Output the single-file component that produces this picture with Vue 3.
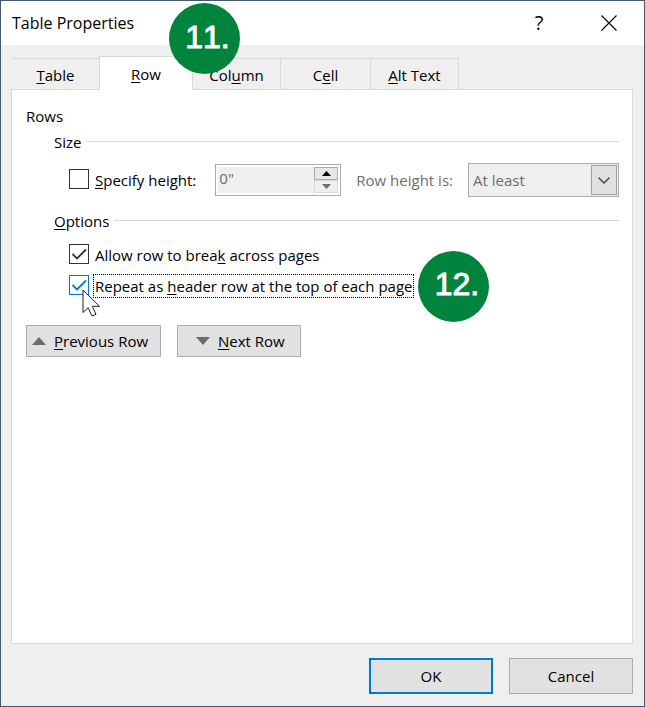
<script setup>
import { ref } from 'vue'

const activeTab = ref('Row')
const tabs = [
  { name: 'Table', before: '', key: 'T', after: 'able', width: 'w-table' },
  { name: 'Row', before: '', key: 'R', after: 'ow', width: 'w-row' },
  { name: 'Column', before: 'Col', key: 'u', after: 'mn', width: 'w-column' },
  { name: 'Cell', before: 'C', key: 'e', after: 'll', width: 'w-cell' },
  { name: 'Alt Text', before: '', key: 'A', after: 'lt Text', width: 'w-alt' },
]

const specifyHeight = ref(false)
const allowBreak = ref(true)
const repeatHeader = ref(true)
const height = ref('0"')
</script>

<template>
  <main class="dialog">
    <header class="titlebar">
      <h1>Table Properties</h1>
      <span class="badge badge-tab">11.</span>
      <button class="caption help" type="button" aria-label="Help">?</button>
      <button class="caption" type="button" aria-label="Close">
        <svg width="16" height="16" viewBox="0 0 16 16"><path d="M.5 .5L15.5 15.5M15.5 .5L.5 15.5" stroke="#000" stroke-width="1.1" fill="none" /></svg>
      </button>
    </header>

    <nav class="tabs" role="tablist">
      <button
        v-for="tab in tabs"
        :key="tab.name"
        type="button"
        role="tab"
        :aria-selected="tab.name === activeTab"
        :class="['tab', tab.width, { active: tab.name === activeTab }]"
        @click="activeTab = tab.name"
      >{{ tab.before }}<u>{{ tab.key }}</u>{{ tab.after }}</button>
    </nav>

    <section class="panel">
      <h2>Rows</h2>

      <div class="group">
        <div class="legend"><span>Size</span><i></i></div>
        <div class="size-row">
          <label class="option" for="specify">
            <span class="check"><input id="specify" v-model="specifyHeight" type="checkbox" /></span>
            <span class="caption-text"><u>S</u>pecify height:</span>
          </label>
          <div class="spinner">
            <input v-model="height" type="text" aria-label="Height" disabled />
            <div class="steps">
              <button class="up" type="button" aria-label="Increase">
                <svg width="9" height="5" viewBox="0 0 9 5"><path d="M0 5L4.500 0L9 5Z" fill="#000" /></svg>
              </button>
              <button class="down" type="button" aria-label="Decrease">
                <svg width="9" height="5" viewBox="0 0 9 5"><path d="M0 0L4.500 5L9 0Z" fill="#6d6d6d" /></svg>
              </button>
            </div>
          </div>
          <label class="muted" for="rule">Row height is:</label>
          <div class="combo">
            <select id="rule" disabled>
              <option>At least</option>
              <option>Exactly</option>
            </select>
            <span class="arrow">
              <svg width="12" height="7" viewBox="0 0 12 7"><path d="M.7 .7L6 6L11.300 .7" stroke="#404040" stroke-width="1.300" fill="none" /></svg>
            </span>
          </div>
        </div>
      </div>

      <div class="group options">
        <div class="legend"><span><u>O</u>ptions</span><i></i></div>
        <label class="option" for="break">
          <span class="check">
            <input id="break" v-model="allowBreak" type="checkbox" />
            <svg v-if="allowBreak" class="tick" width="20" height="20" viewBox="0 0 20 20"><path d="M3.500 10L8 14.500L17 5.500" stroke="#333" stroke-width="1.800" fill="none" /></svg>
          </span>
          <span class="caption-text">Allow row to brea<u>k</u> across pages</span>
        </label>
        <div class="repeat-row">
          <label class="option" for="repeat">
            <span class="check hot">
              <input id="repeat" v-model="repeatHeader" type="checkbox" />
              <svg v-if="repeatHeader" class="tick" width="20" height="20" viewBox="0 0 20 20"><path d="M3.500 10L8 14.500L17 5.500" stroke="#0078d7" stroke-width="1.800" fill="none" /></svg>
              <svg class="pointer" width="19" height="28" viewBox="0 0 19 28"><path d="M1 1V23.500L6.200 18.700L10 27L14 25.300L10.300 17.300H17.500Z" fill="#fff" stroke="#1c1c28" stroke-width="1" /></svg>
            </span>
            <span class="caption-text focused">Repeat as <u>h</u>eader row at the top of each page</span>
          </label>
          <span class="badge">12.</span>
        </div>
      </div>

      <div class="row-nav">
        <button class="push previous" type="button">
          <svg width="14" height="8" viewBox="0 0 14 8"><path d="M0 8L7 0L14 8Z" fill="#6d6d6d" /></svg>
          <span><u>P</u>revious Row</span>
        </button>
        <button class="push next" type="button">
          <svg width="14" height="8" viewBox="0 0 14 8"><path d="M0 0L7 8L14 0Z" fill="#6d6d6d" /></svg>
          <span><u>N</u>ext Row</span>
        </button>
      </div>
    </section>

    <footer class="footer">
      <button class="push action default" type="button">OK</button>
      <button class="push action" type="button">Cancel</button>
    </footer>
  </main>
</template>

<style>
body {
  margin: 0;
}
</style>

<style scoped>
* {
  box-sizing: border-box;
}

.dialog {
  display: flex;
  flex-direction: column;
  min-height: 100vh;
  border: 1px solid #42586c;
  background: #efefef;
  color: #000;
  font: 15px/20px "Open Sans", "Noto Sans", sans-serif;
}

button,
input,
select {
  margin: 0;
  padding: 0;
  border-radius: 0;
  color: inherit;
  font: inherit;
}

u {
  text-decoration-thickness: 1px;
  text-underline-offset: 2px;
}

svg {
  display: block;
}

.titlebar {
  position: relative;
  display: flex;
  align-items: center;
  height: 44px;
  padding: 0 0 0 11px;
  background: #fff;
}

h1 {
  flex: 1;
  margin: 0;
  font-size: 16px;
  font-weight: 400;
}

.caption {
  display: flex;
  align-items: center;
  justify-content: center;
  width: 70px;
  height: 44px;
  border: 0;
  background: none;
}

.help {
  font-size: 20px;
}

.badge {
  display: flex;
  align-items: center;
  justify-content: center;
  flex: none;
  width: 71px;
  height: 71px;
  padding: 0 0 4px 6px;
  border-radius: 50%;
  background: #00843d;
  color: #fff;
  font: 32px/36px "Liberation Sans", Arial, sans-serif;
  font-kerning: none;
  -webkit-text-stroke: 1px #fff;
}

.badge-tab {
  position: absolute;
  top: 2px;
  left: 168px;
  z-index: 2;
}

.tabs {
  display: flex;
  align-items: flex-end;
  padding: 11px 11px 0;
}

.tab {
  height: 31px;
  padding-top: 2px;
  border: solid #d9d9d9;
  border-width: 1px 1px 0 0;
  background: #efefef;
}

.tab.active {
  z-index: 1;
  height: 34px;
  margin: 0 0 -1px -1px;
  padding: 0;
  border-left-width: 1px;
  background: #fff;
}

.w-table { width: 88px; }
.w-row { width: 94px; }
.w-column { width: 88px; }
.w-cell { width: 90px; }
.w-alt { width: 88px; }

.panel {
  flex: 1;
  margin: 0 11px 0 10px;
  padding: 16px 13px 16px 14px;
  border: 1px solid #d9d9d9;
  background: #fff;
}

h2 {
  margin: 0;
  font-size: 15px;
  font-weight: 400;
}

.group {
  padding: 6px 0 0 28px;
}

.options {
  padding-top: 14px;
}

.legend {
  display: flex;
  align-items: center;
  gap: 5px;
}

.legend i {
  flex: 1;
  height: 1px;
  margin-bottom: 1px;
  background: #d9d9d9;
}

.size-row {
  display: flex;
  align-items: center;
  margin: 11px 0 0 15px;
}

.option {
  display: flex;
  align-items: center;
  gap: 4px;
}

.options > .option {
  margin: 12px 0 0 15px;
}

.check {
  position: relative;
  width: 20px;
  height: 20px;
  margin-bottom: 2px;
}

.check input {
  display: block;
  width: 20px;
  height: 20px;
  border: 1px solid #333;
  background: #fff;
  appearance: none;
}

.check.hot input {
  border-color: #0078d7;
}

.tick {
  position: absolute;
  inset: 0;
  pointer-events: none;
}

.pointer {
  position: absolute;
  top: 14px;
  left: 13px;
  z-index: 1;
  pointer-events: none;
}

.caption-text {
  padding: 1px;
  border: 1px solid transparent;
  white-space: nowrap;
}

.focused {
  border: 1px dotted #000;
}

.spinner {
  display: flex;
  width: 126px;
  height: 32px;
  margin-left: auto;
  padding: 2px;
  border: 1px solid #acacb0;
  background: #fff;
}

.spinner input {
  flex: 1;
  min-width: 0;
  padding: 0 0 4px 1px;
  border: 0;
  background: #efefef;
  color: #6d6d6d;
}

.steps {
  display: flex;
  flex-direction: column;
  width: 24px;
}

.steps button {
  display: flex;
  flex: 1;
  align-items: center;
  justify-content: center;
  border: 1px solid #acacac;
  background: #e8e8e8;
}

.steps .down {
  border-color: #d9d9d9;
  background: #efefef;
}

.muted {
  margin-left: 15px;
  color: #6d6d6d;
  white-space: nowrap;
}

.combo {
  position: relative;
  width: 151px;
  height: 34px;
  margin-left: 15px;
}

.combo select {
  width: 100%;
  height: 100%;
  padding: 0 30px 0 4px;
  border: 1px solid #acacb4;
  background: #efefef;
  color: #6d6d6d;
  opacity: 1;
  appearance: none;
}

.arrow {
  position: absolute;
  top: 2px;
  right: 2px;
  bottom: 2px;
  display: flex;
  align-items: center;
  justify-content: center;
  width: 26px;
  border: 1px solid #a0a0a0;
  background: #e1e1e1;
  pointer-events: none;
}

.repeat-row {
  display: flex;
  align-items: center;
  gap: 4px;
  height: 24px;
  margin: 7px 0 0 15px;
}

.row-nav {
  display: flex;
  gap: 16px;
  margin-top: 27px;
}

.push {
  display: flex;
  align-items: center;
  height: 32px;
  border: 1px solid #adadad;
  background: #e1e1e1;
}

.row-nav .push {
  gap: 8px;
  white-space: nowrap;
}

.previous {
  width: 135px;
  padding-left: 5px;
}

.next {
  width: 124px;
  padding-left: 18px;
}

.footer {
  display: flex;
  justify-content: flex-end;
  gap: 16px;
  padding: 14px 11px 12px;
}

.action {
  justify-content: center;
  width: 124px;
  height: 36px;
}

.default {
  border: 2px solid #0078d7;
}
</style>
